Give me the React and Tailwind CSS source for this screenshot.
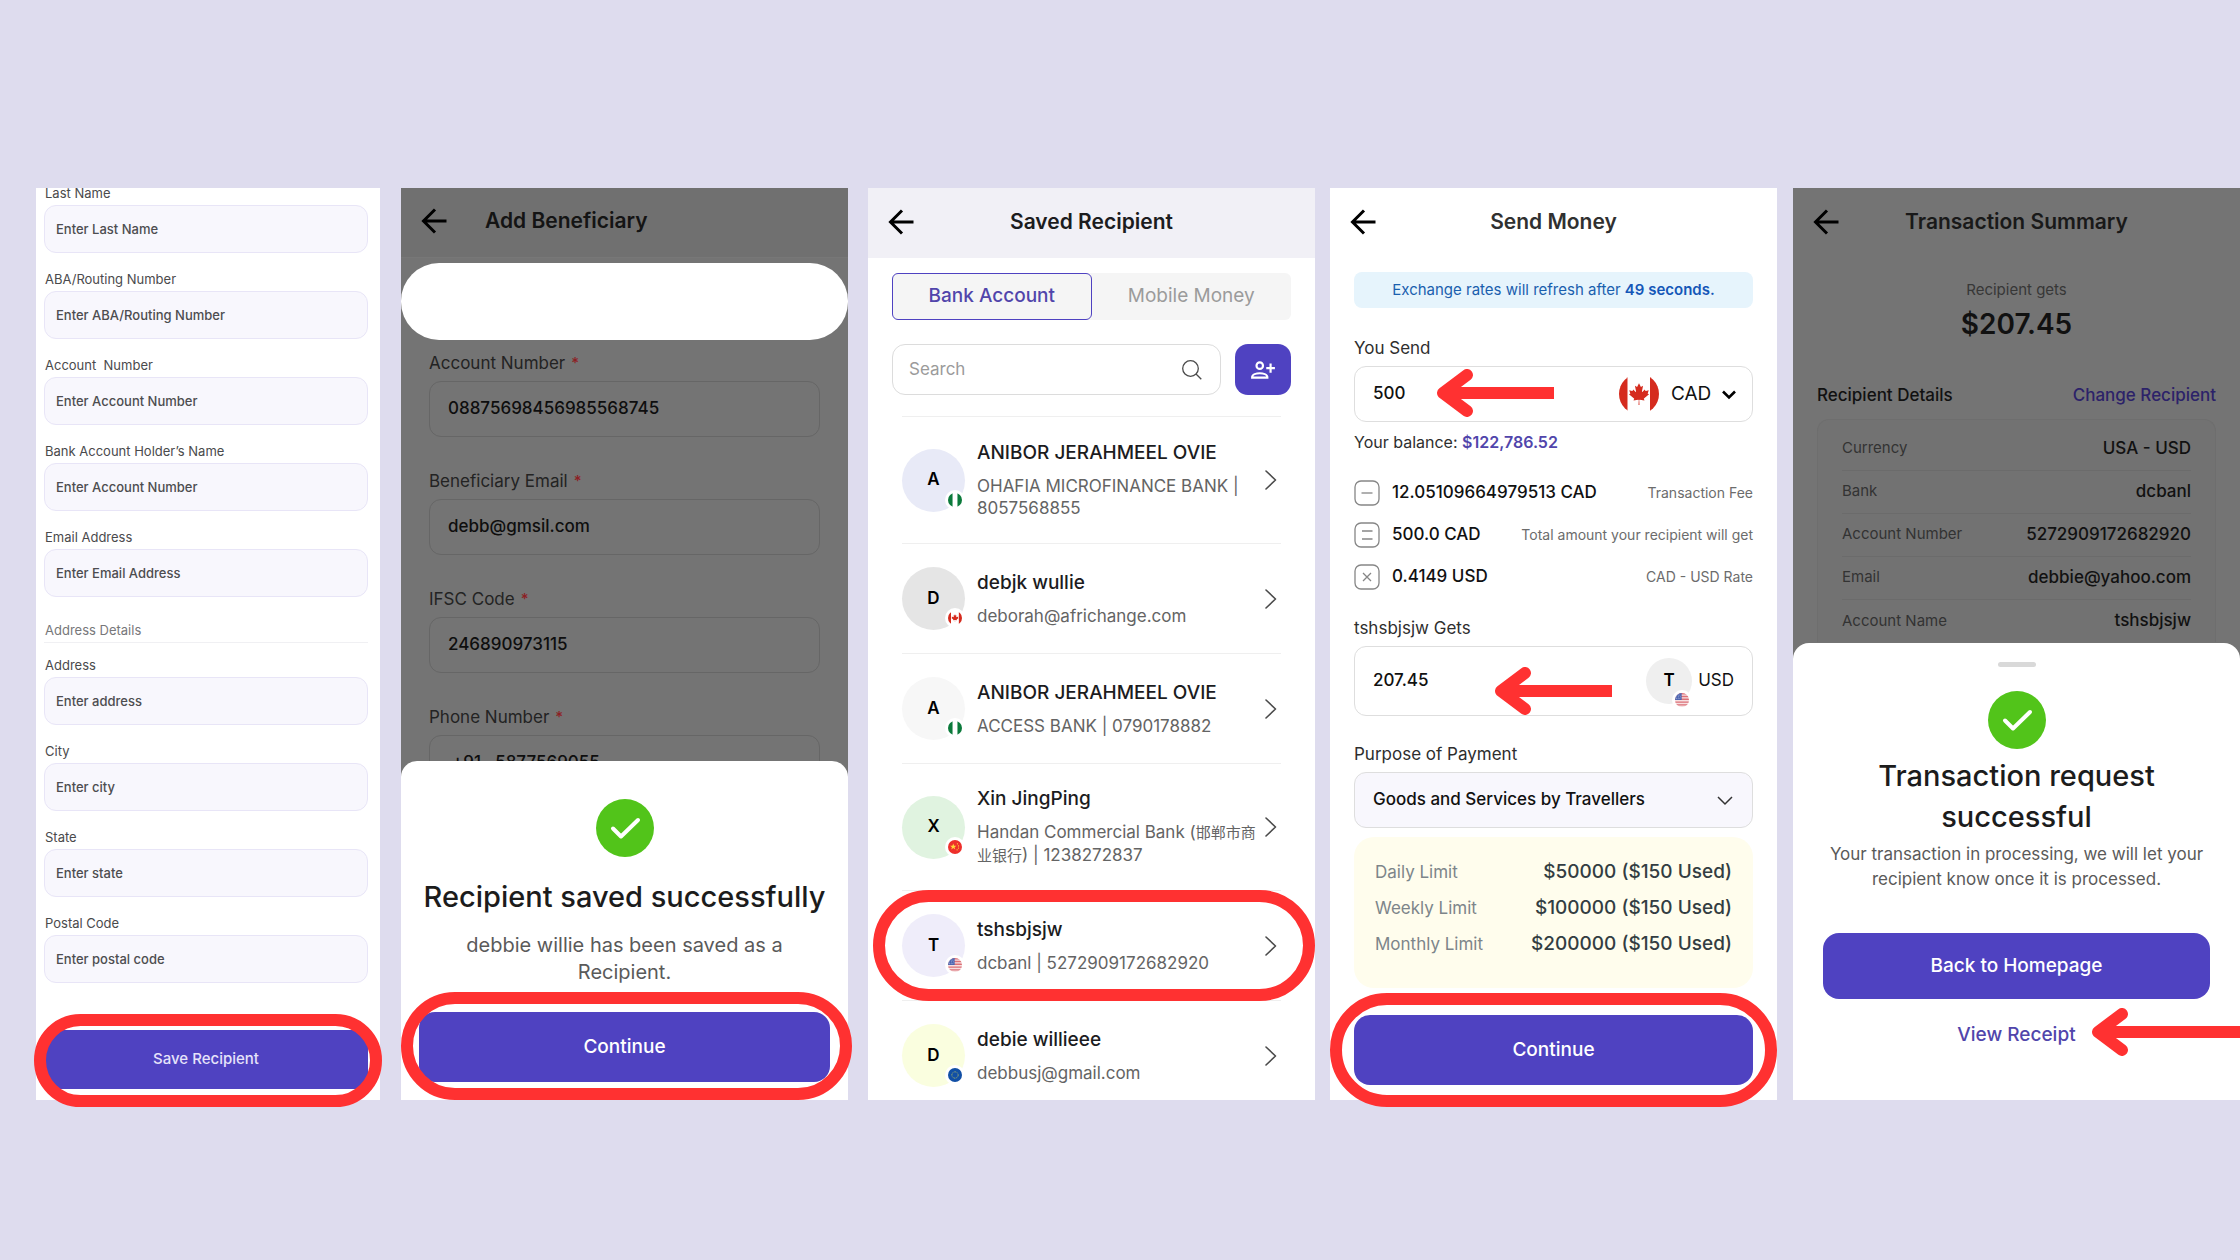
import { useId } from "react"

// Annotations
function Ring({ className }) {
  return (
    <span
      aria-hidden="true"
      className={`pointer-events-none absolute z-20 rounded-full border-[12px] border-[#ff3131] ${className}`}
    />
  )
}

function RedArrow({ length = 117, className }) {
  return (
    <svg
      aria-hidden="true"
      width={length}
      height="48"
      viewBox={`0 0 ${length} 48`}
      fill="none"
      stroke="#ff3131"
      strokeWidth="12"
      strokeLinejoin="round"
      className={`pointer-events-none absolute z-20 ${className}`}
    >
      <path d="M30 6 6 24l24 18" strokeLinecap="round" />
      <path d={`M8 24H${length}`} />
    </svg>
  )
}

// Icons
function BackIcon() {
  return (
    <svg width="26" height="26" viewBox="0 0 26 26" fill="none" stroke="#000" strokeWidth="3">
      <path d="M25.5 13H2.5M14 1.5 2.5 13 14 24.5" />
    </svg>
  )
}

function ChevronRight() {
  return (
    <svg width="12" height="20" viewBox="0 0 12 20" fill="none" stroke="#4b4b4b" strokeWidth="1.6" className="shrink-0">
      <path d="m1 1 9.5 9L1 19" strokeLinecap="round" strokeLinejoin="round" />
    </svg>
  )
}

function CheckBadge() {
  return (
    <svg width="58" height="58" viewBox="0 0 58 58" fill="none" className="mx-auto">
      <circle cx="29" cy="29" r="29" fill="#52c41a" />
      <path d="m17 29.5 8 8L42 21" stroke="#fff" strokeWidth="4" strokeLinecap="round" strokeLinejoin="round" />
    </svg>
  )
}

function Operator({ type }) {
  return (
    <svg width="26" height="26" viewBox="0 0 26 26" fill="none" stroke="#868686" strokeWidth="1.3" className="shrink-0">
      <rect x="1" y="1" width="24" height="24" rx="6" />
      {type === "minus" && <path d="M7.5 13h11" />}
      {type === "equals" && <path d="M8 9h10.5M8 17h10.5" />}
      {type === "times" && <path d="m9 9 8 8m0-8-8 8" />}
    </svg>
  )
}

function Flag({ country, className }) {
  return (
    <svg viewBox="0 0 40 40" className={`overflow-hidden rounded-full bg-white ${className}`}>
      {country === "ng" && (
        <>
          <path fill="#fff" d="M0 0h40v40H0z" />
          <path fill="#0b7a3b" d="M0 0h13v40H0zM27 0h13v40H27z" />
        </>
      )}
      {country === "ca" && (
        <>
          <path fill="#fff" d="M0 0h40v40H0z" />
          <path fill="#d52b1e" d="M0 0h8.5v40H0zM31 0h9v40h-9z" />
          <path
            fill="#d52b1e"
            transform="translate(-5.92 7.04) scale(.0054)"
            d="M4890 4430l-45-863a95 95 0 0 1 111-98l859 151-116-320a65 65 0 0 1 20-73l941-762-212-99a65 65 0 0 1-34-79l186-572-542 115a65 65 0 0 1-73-38l-105-247-423 454a65 65 0 0 1-111-57l204-1052-327 189a65 65 0 0 1-91-27l-332-652-332 652a65 65 0 0 1-91 27l-327-189 204 1052a65 65 0 0 1-111 57l-423-454-105 247a65 65 0 0 1-73 38l-542-115 186 572a65 65 0 0 1-34 79l-212 99 941 762a65 65 0 0 1 20 73l-116 320 859-151a95 95 0 0 1 111 98l-45 863z"
          />
        </>
      )}
      {country === "cn" && (
        <>
          <path fill="#ee2f2b" d="M0 0h40v40H0z" />
          <path fill="#ffd83b" d="m15 10 2.4 6.5h6.6l-5.3 4 2 6.5-5.7-4-5.7 4 2-6.5-5.3-4h6.6z" />
          <circle cx="27" cy="11" r="1.8" fill="#ffd83b" />
          <circle cx="30" cy="17" r="1.8" fill="#ffd83b" />
          <circle cx="30" cy="23" r="1.8" fill="#ffd83b" />
          <circle cx="26" cy="28" r="1.8" fill="#ffd83b" />
        </>
      )}
      {country === "us" && (
        <>
          <path fill="#f7dfe0" d="M0 0h40v40H0z" />
          <path fill="#dc7077" d="M0 0h40v4H0zM0 8h40v4H0zM0 16h40v4H0zM0 24h40v4H0zM0 32h40v4H0z" />
          <path fill="#4a63b0" d="M0 0h19v20H0z" />
          <path stroke="#fff" strokeWidth="1.6" strokeDasharray="2 3" d="M3 6h14M4 11h14M3 16h14" />
        </>
      )}
      {country === "eu" && (
        <>
          <path fill="#114fa5" d="M0 0h40v40H0z" />
          <circle cx="20" cy="20" r="9" fill="none" stroke="#d9d65a" strokeWidth="2.6" strokeDasharray="2.2 2.512" />
        </>
      )}
    </svg>
  )
}

function Header({ title, className, titleClass }) {
  return (
    <header className={`relative flex h-[70px] items-center px-5 pb-[3px] ${className}`}>
      <button type="button" aria-label="Back" className="relative z-10">
        <BackIcon />
      </button>
      <h2 className={`text-[21px] leading-7 font-semibold ${titleClass}`}>{title}</h2>
    </header>
  )
}

// Screen 1: recipient form
function FormField({ label, placeholder }) {
  const id = useId()
  return (
    <div className="mb-4">
      <label htmlFor={id} className="mb-[2px] block pl-px text-[13px] leading-5 whitespace-pre text-[#4a4a4c]">
        {label}
      </label>
      <input
        id={id}
        type="text"
        placeholder={placeholder}
        className="block h-12 w-full rounded-xl border border-[#e8e5f7] bg-[#f8f7fd] px-[11px] text-[13px] font-medium text-[#333] placeholder:text-[#4d4d50] focus:outline-none"
      />
    </div>
  )
}

function RecipientForm() {
  return (
    <section className="min-w-0 flex-[344] bg-white">
      <form className="pr-3 pb-[11px] pl-2">
        <div className="overflow-hidden">
          <div className="-mt-[5px]">
            <FormField label="Last Name" placeholder="Enter Last Name" />
            <FormField label="ABA/Routing Number" placeholder="Enter ABA/Routing Number" />
            <FormField label="Account  Number" placeholder="Enter Account Number" />
            <FormField label="Bank Account Holder’s Name" placeholder="Enter Account Number" />
            <FormField label="Email Address" placeholder="Enter Email Address" />
            <h3 className="mt-[23px] mb-3 border-b border-[#f0f0f3] pb-[2px] pl-px text-[13px] leading-5 text-[#77777a]">
              Address Details
            </h3>
            <FormField label="Address" placeholder="Enter address" />
            <FormField label="City" placeholder="Enter city" />
            <FormField label="State" placeholder="Enter state" />
            <FormField label="Postal Code" placeholder="Enter postal code" />
          </div>
        </div>
        <div className="relative mt-[31px]">
          <button type="button" className="block h-[59px] w-full rounded-xl bg-[#4f42c1] text-[15px] font-medium text-[#e6e3fa]">
            Save Recipient
          </button>
          <Ring className="-top-4 -right-3.5 -bottom-[18px] -left-2.5" />
        </div>
      </form>
    </section>
  )
}

// Screen 2: beneficiary saved
function BeneficiaryField({ label, value, prefix }) {
  const id = useId()
  return (
    <div className="mb-[34px]">
      <label htmlFor={id} className="mb-2 flex h-5 items-center gap-1.5 text-[17px] leading-5 text-[#232323]">
        {label} <span className="text-[15px] font-medium text-[#8d1f24]">*</span>
      </label>
      <div className="flex h-14 items-center rounded-xl border border-[#666] px-[18px] text-[17px] font-medium text-[#0e0e0e]">
        {prefix && <span className="pr-3.5 pl-1">{prefix}</span>}
        <input id={id} type="text" defaultValue={value} className="min-w-0 flex-1 bg-transparent focus:outline-none" />
      </div>
    </div>
  )
}

function AddBeneficiary() {
  return (
    <section className="relative ml-[21px] min-w-0 flex-[447] bg-[#747474]">
      <Header title="Add Beneficiary" className="border-b border-[#777] bg-[#707070]" titleClass="ml-[38px] text-[#141414]" />
      <div className="mt-[5px] h-[77px] rounded-[38px] bg-white" />
      <form className="px-7 pt-[13px]">
        <BeneficiaryField label="Account Number" value="08875698456985568745" />
        <BeneficiaryField label="Beneficiary Email" value="debb@gmsil.com" />
        <BeneficiaryField label="IFSC Code" value="246890973115" />
        <BeneficiaryField label="Phone Number" value="5877569055" prefix="+91" />
      </form>
      <div role="dialog" aria-label="Recipient saved" className="absolute inset-x-0 bottom-0 rounded-t-2xl bg-white px-[18px] pt-[38px] pb-[18px] text-center">
        <CheckBadge />
        <h3 className="mt-5 text-[29px] leading-10 font-medium text-[#1c1c1c]">Recipient saved successfully</h3>
        <p className="mx-auto mt-[15px] max-w-[340px] text-xl leading-[27px] text-[#5a5a5a]">
          debbie willie has been saved as a Recipient.
        </p>
        <div className="relative mt-[26px]">
          <button type="button" className="block h-[70px] w-full rounded-2xl bg-[#4f42c1] text-[19px] font-medium text-white">
            Continue
          </button>
          <Ring className="-top-5 -right-[22px] -bottom-[18px] -left-[18px]" />
        </div>
      </div>
    </section>
  )
}

// Screen 3: saved recipients
const recipients = [
  { name: "ANIBOR JERAHMEEL OVIE", detail: "OHAFIA MICROFINANCE BANK | 8057568855", country: "ng", color: "bg-[#e8eaf7]", tall: true },
  { name: "debjk wullie", detail: "deborah@africhange.com", country: "ca", color: "bg-[#e5e5e5]" },
  { name: "ANIBOR JERAHMEEL OVIE", detail: "ACCESS BANK | 0790178882", country: "ng", color: "bg-[#f7f7f7]" },
  {
    name: "Xin JingPing",
    detail: (
      <>
        Handan Commercial Bank (<span lang="zh" className="text-[15px]">邯郸市商业银行</span>) | 1238272837
      </>
    ),
    country: "cn",
    color: "bg-[#e0f3e0]",
    tall: true,
  },
  { name: "tshsbjsjw", detail: "dcbanl | 5272909172682920", country: "us", color: "bg-[#efedfa]", selected: true },
  { name: "debie willieee", detail: "debbusj@gmail.com", country: "eu", color: "bg-[#fafedf]" },
]

function SavedRecipient() {
  return (
    <section className="ml-5 min-w-0 flex-[447] bg-white">
      <Header title="Saved Recipient" className="bg-[#f1f0f6]" titleClass="absolute inset-x-0 text-center text-[#1c1c1e]" />
      <div className="px-6 pt-[15px]">
        <div className="grid h-[47px] grid-cols-2 rounded-md bg-[#f5f5f5] text-[19px]">
          <button type="button" className="rounded-md border border-[#4f42c1] font-medium text-[#5145ab]">
            Bank Account
          </button>
          <button type="button" className="text-[#9b9b9b]">Mobile Money</button>
        </div>
        <div className="mt-6 flex gap-3.5">
          <label className="flex h-[51px] flex-1 items-center rounded-[13px] border border-[#dcdcdc] pr-[18px] pl-4">
            <input
              type="search"
              aria-label="Search"
              placeholder="Search"
              className="min-w-0 flex-1 text-[17px] placeholder:text-[#9b9b9b] focus:outline-none"
            />
            <svg width="20" height="20" viewBox="0 0 20 20" fill="none" stroke="#4b4b4b" strokeWidth="1.3">
              <circle cx="8.5" cy="8.5" r="7.8" />
              <path d="m14 14 5.3 5.3" />
            </svg>
          </label>
          <button type="button" aria-label="Add recipient" className="flex w-14 items-center justify-center rounded-[13px] bg-[#4f42c1]">
            <svg width="26" height="26" viewBox="0 0 24 24" fill="none" stroke="#fff" strokeWidth="2">
              <circle cx="9" cy="8" r="3" />
              <path d="M2 19v-.5C2 16 6 15 9 15s7 1 7 3.5v.5zM19 6v8.5M15 10.25h8" />
            </svg>
          </button>
        </div>
      </div>
      <ul className="mx-[34px] mt-[21px] border-t border-[#efefef]">
        {recipients.map((r, i) => (
          <li
            key={i}
            className={`relative flex items-center border-b border-[#efefef] py-[23px] last:border-0 last:pb-3 ${r.tall ? "min-h-[127px]" : ""}`}
          >
            <div className={`relative flex size-[63px] shrink-0 items-center justify-center rounded-full text-[17px] font-semibold text-black ${r.color}`}>
              {r.name[0].toUpperCase()}
              <span className="absolute right-0 bottom-[2px] rounded-full bg-white p-[3px]">
                <Flag country={r.country} className="size-3.5" />
              </span>
            </div>
            <div className="ml-3 min-w-0 flex-1">
              <p className="text-[19px] leading-6 font-medium text-[#1c1c1e]">{r.name}</p>
              <p className="mt-2.5 text-[17px] leading-[22px] text-[#646464]">{r.detail}</p>
            </div>
            <a href="#" aria-label={`Open ${r.name}`} className="mr-1 block">
              <ChevronRight />
            </a>
            {r.selected && <Ring className="-top-px -right-[34px] -bottom-px -left-[29px]" />}
          </li>
        ))}
      </ul>
    </section>
  )
}

// Screen 4: send money
const fees = [
  { type: "minus", amount: "12.05109664979513 CAD", label: "Transaction Fee" },
  { type: "equals", amount: "500.0 CAD", label: "Total amount your recipient will get" },
  { type: "times", amount: "0.4149 USD", label: "CAD - USD Rate" },
]

const limits = [
  ["Daily Limit", "$50000 ($150 Used)"],
  ["Weekly Limit", "$100000 ($150 Used)"],
  ["Monthly Limit", "$200000 ($150 Used)"],
]

function SendMoney() {
  return (
    <section className="ml-[15px] min-w-0 flex-[447] bg-white">
      <Header title="Send Money" className="" titleClass="absolute inset-x-0 text-center text-[#303030]" />
      <form className="px-6 pt-3.5 pb-[15px]">
        <p className="rounded-lg bg-[#e6f4fc] text-center text-[15px] leading-9 text-[#1a5fae]">
          Exchange rates will refresh after <b className="font-semibold text-[#1457b8]">49 seconds.</b>
        </p>

        <label htmlFor="send" className="mt-[30px] block text-[17px] leading-5 text-[#2e2e2e]">You Send</label>
        <div className="relative mt-2 flex h-14 items-center rounded-xl border border-[#dedede] pr-4 pl-[18px]">
          <input id="send" type="text" defaultValue="500" className="min-w-0 flex-1 text-[17px] font-medium text-[#111] focus:outline-none" />
          <Flag country="ca" className="size-10" />
          <div className="relative ml-3">
            <select aria-label="Send currency" className="appearance-none bg-transparent pr-6 text-[19px] text-[#111] focus:outline-none">
              <option>CAD</option>
            </select>
            <svg width="14" height="10" viewBox="0 0 14 10" fill="none" stroke="#000" strokeWidth="2.6" className="pointer-events-none absolute top-2.5 right-0">
              <path d="m1 1.5 6 6 6-6" />
            </svg>
          </div>
          <RedArrow className="top-[2px] left-[82px]" />
        </div>
        <p className="mt-2.5 text-base leading-5 text-[#2e2e2e]">
          Your balance: <b className="font-semibold text-[#5145ab]">$122,786.52</b>
        </p>

        <ul className="mt-[28px] space-y-4">
          {fees.map((f) => (
            <li key={f.type} className="flex h-[26px] items-center">
              <Operator type={f.type} />
              <span className="ml-3 flex-1 text-[17px] font-medium text-[#111]">{f.amount}</span>
              <span className="text-sm text-[#6c6c6c]">{f.label}</span>
            </li>
          ))}
        </ul>

        <label htmlFor="gets" className="mt-[28px] block text-[17px] leading-5 text-[#2e2e2e]">tshsbjsjw Gets</label>
        <div className="relative mt-2 flex h-[70px] items-center rounded-xl border border-[#dedede] pr-[18px] pl-[18px]">
          <input id="gets" type="text" defaultValue="207.45" className="min-w-0 flex-1 text-[17px] font-medium text-[#111] focus:outline-none" />
          <div className="relative flex size-[46px] items-center justify-center rounded-full bg-[#efefef] text-[17px] font-semibold text-black">
            T
            <span className="absolute right-0 -bottom-1.5 rounded-full bg-white p-[3px]">
              <Flag country="us" className="size-3.5" />
            </span>
          </div>
          <span className="ml-1.5 text-[17px] text-[#111]">USD</span>
          <RedArrow className="top-5 left-[140px]" />
        </div>

        <label htmlFor="purpose" className="mt-[28px] block text-[17px] leading-5 text-[#2e2e2e]">Purpose of Payment</label>
        <div className="relative mt-2">
          <select
            id="purpose"
            className="block h-14 w-full appearance-none rounded-xl border border-[#dedede] bg-[#f8f7fd] px-[18px] text-[17px] font-medium text-[#111] focus:outline-none"
          >
            <option>Goods and Services by Travellers</option>
          </select>
          <svg width="16" height="10" viewBox="0 0 16 10" fill="none" stroke="#333" strokeWidth="1.5" className="pointer-events-none absolute top-6 right-5">
            <path d="m1 1 7 7 7-7" />
          </svg>
        </div>

        <div className="mt-[9px] rounded-[20px] bg-[#fffded] px-[21px] pt-[17px] pb-[26px]">
          <table className="w-full">
            <tbody>
              {limits.map(([label, value]) => (
                <tr key={label} className="h-9">
                  <th scope="row" className="text-left text-[17px] leading-6 font-normal text-[#7d858a]">{label}</th>
                  <td className="text-right text-[19px] leading-6 font-medium text-[#333d42]">{value}</td>
                </tr>
              ))}
            </tbody>
          </table>
        </div>

        <div className="relative mt-[27px]">
          <button type="button" className="block h-[70px] w-full rounded-2xl bg-[#4f42c1] text-[19px] font-medium text-white">
            Continue
          </button>
          <Ring className="-inset-x-6 -top-[22px] -bottom-[22px]" />
        </div>
      </form>
    </section>
  )
}

// Screen 5: transaction summary
const details = [
  ["Currency", "USA - USD"],
  ["Bank", "dcbanl"],
  ["Account Number", "5272909172682920"],
  ["Email", "debbie@yahoo.com"],
  ["Account Name", "tshsbjsjw"],
]

function TransactionSummary() {
  return (
    <section className="relative ml-4 min-w-0 flex-[447] bg-[#747474]">
      <Header title="Transaction Summary" className="" titleClass="absolute inset-x-0 text-center text-[#191919]" />
      <p className="mt-[22px] text-center text-[15px] leading-5 text-[#373737]">Recipient gets</p>
      <p className="mt-2 text-center text-[28px] leading-8 font-semibold text-[#111]">$207.45</p>
      <div className="px-6">
        <div className="mt-[43px] flex justify-between text-[17px] leading-6 font-medium">
          <h3 className="text-[#111]">Recipient Details</h3>
          <a href="#" className="text-[#2c2269]">Change Recipient</a>
        </div>
        <div className="mt-3 rounded-t-xl border border-b-0 border-[#6e6e6e] bg-[#727272] px-6 pt-[7px]">
          <table className="w-full">
            <tbody>
              {details.map(([label, value]) => (
                <tr key={label} className="h-[43px] border-b border-[#6b6b6b] last:border-0">
                  <th scope="row" className="text-left text-[15px] font-normal text-[#333]">{label}</th>
                  <td className="text-right text-[17px] font-medium text-[#111]">{value}</td>
                </tr>
              ))}
            </tbody>
          </table>
        </div>
      </div>
      <div role="dialog" aria-label="Transaction request" className="absolute inset-x-0 bottom-0 rounded-t-2xl bg-white px-[30px] pt-[19px] pb-[53px] text-center">
        <div className="mx-auto mb-6 h-[5px] w-[38px] rounded-full bg-[#d9d9d9]" />
        <CheckBadge />
        <h3 className="mx-auto mt-1.5 max-w-80 text-[29px] leading-[41px] font-medium text-[#1c1c1c]">
          Transaction request successful
        </h3>
        <p className="-mx-4 mt-[5px] text-[17px] leading-[25px] text-[#5a5a5a]">
          Your transaction in processing, we will let your
          <br />
          recipient know once it is processed.
        </p>
        <button type="button" className="mt-[41px] block h-[66px] w-full rounded-2xl bg-[#4f42c1] text-[19px] font-medium text-white">
          Back to Homepage
        </button>
        <a href="#" className="mt-6 block text-[19px] leading-6 font-medium text-[#5145ab]">View Receipt</a>
        <RedArrow length={148} className="right-0 bottom-11" />
      </div>
    </section>
  )
}

export default function App() {
  return (
    <main className="flex min-h-screen items-start bg-[#dedcee] pt-[188px] pb-[160px] pl-9 font-['Inter','Noto_Sans_CJK_SC',sans-serif]">
      <div className="flex w-full items-stretch">
        <RecipientForm />
        <AddBeneficiary />
        <SavedRecipient />
        <SendMoney />
        <TransactionSummary />
      </div>
    </main>
  )
}
